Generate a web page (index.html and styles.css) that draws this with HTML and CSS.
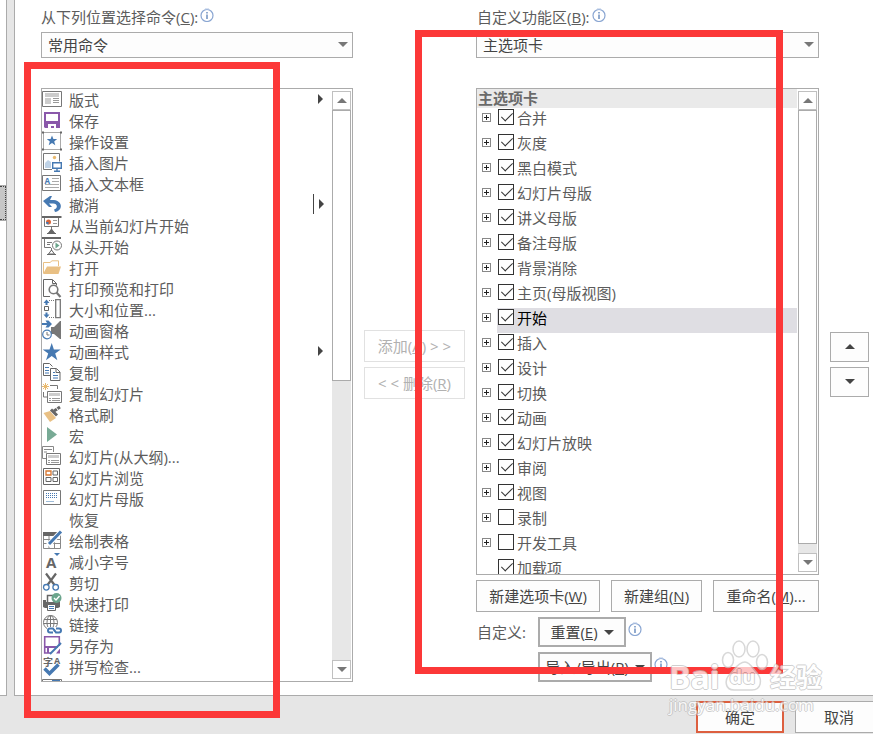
FILE: index.html
```html
<!DOCTYPE html>
<html lang="zh-CN">
<head>
    <meta charset="UTF-8">
    <meta name="viewport" content="width=device-width, initial-scale=1.0">
    <title>自定义功能区</title>
    <link rel="stylesheet" href="styles.css">
</head>
<body>
    <svg class="defs" aria-hidden="true">
        <symbol id="info" viewBox="0 0 14 14">
            <circle cx="7" cy="7.500" r="6" fill="none" stroke="#8aa6d2" stroke-width="1.200"/>
            <path d="M7 4v1.500M7 6.500v4.500" stroke="#4a74b0" stroke-width="1.200"/>
            <path d="M5 1h4" stroke="#b4c6e4"/>
        </symbol>
    </svg>
    <div class="dialog">
        <aside class="sidebar">
            <div class="sidebar-thumb"></div>
        </aside>
        <main class="panel">
            <!-- Commands -->
            <section class="column">
                <div class="caption"><label for="source">从下列位置选择命令(<u>C</u>):</label><svg class="info"><use href="#info"/></svg></div>
                <div class="dropdown">
                    <select id="source"><option>常用命令</option></select>
                </div>
                <div class="listbox commands">
                    <ul class="command-list">
                        <li><svg viewBox="0 0 20 21"><path d="M.5 1.500h19v15H.5z" fill="#fff" stroke="#777"/><path d="M3 3h14v4H3zM3 8h6v6H3z" fill="#ccc"/><path d="M11 8.500h6M11 10.500h6M11 12.500h6" stroke="#999"/></svg><span>版式</span><i class="more"></i></li>
                        <li><svg viewBox="0 0 20 21"><path d="M2 1h16v16H3l-1-1z" fill="#8a58aa"/><path d="M4 3h12v7H4z" fill="#fff"/><path d="M6 13h8v4h-2v-2H9v2H6z" fill="#fff"/></svg><span>保存</span></li>
                        <li><svg viewBox="0 0 20 21"><path d="M1.500 1v17M18.500 1v17M2 .500h16M2 17.500h16" stroke="#aaa"/><path d="M0-.500h2v2H0zM18-.500h2v2h-2zM0 16.500h2v2H0zM18 16.500h2v2h-2z" fill="#666"/><path d="M10 3.500l1.400 3.600h3.800l-3 2.400 1.100 3.700-3.300-2.200-3.300 2.200 1.100-3.700-3-2.400h3.800z" fill="#4679b2"/></svg><span>操作设置</span></li>
                        <li><svg viewBox="0 0 20 21"><path d="M10 16.500H1.500v-16h16v8" fill="none" stroke="#777"/><circle cx="12.500" cy="4.500" r="1.700" fill="#e9b96e"/><path d="M3 15V10l3-3 3 2v6z" fill="#bfd2e6"/><path d="M10.700 9.700h8.600v5.600h-8.600zM15 15v3M12 18.300h6" fill="#fff" stroke="#4679b2" stroke-width="1.400"/></svg><span>插入图片</span></li>
                        <li><svg viewBox="0 0 20 21"><path d="M.5 1.500h18v15H.5z" fill="#fff" stroke="#777"/><text x="2.500" y="9.500" class="glyph blue" font-size="8">A</text><path d="M10 4.500h7M10 7.500h7M3 10.500h14M3 13.500h14" stroke="#aaa"/></svg><span>插入文本框</span></li>
                        <li><svg viewBox="0 0 20 21"><path d="M1 6l7-5h2L8 5h4c9 1 9 11 1 12l-1-2.500c4-1 4-6-1-6H7l3 3.500H7z" fill="#4679b2"/></svg><span>撤消</span><i class="more split"></i></li>
                        <li><svg viewBox="0 0 20 21"><path d="M0 1h19.500" stroke="#666" stroke-width="2"/><path d="M2.500 2v8.500h14V2M9.500 11v3" fill="none" stroke="#777"/><circle cx="6.500" cy="6" r="2.500" fill="#d9663a"/><path d="M6.500 6v2.500A2.500 2.500 0 0 1 4 6z" fill="#4679b2"/><path d="M11 4.500h4M11 7.500h4" stroke="#999"/><path d="M5 17.500h9M6.500 17l3-4 3 4z" fill="#666" stroke="#666"/></svg><span>从当前幻灯片开始</span></li>
                        <li><svg viewBox="0 0 20 21"><path d="M0 1h19" stroke="#666" stroke-width="2"/><path d="M2.500 2v8.500H9M9.500 11v3M5 5.500h5M5 7.500h3" fill="none" stroke="#777"/><circle cx="15" cy="8.500" r="4.500" fill="#fff" stroke="#777"/><path d="M13.500 5.500l4 3-4 3z" fill="#6ba58c"/><path d="M5 17.500h9M6.500 17l3-4 3 4z" fill="none" stroke="#666"/></svg><span>从头开始</span></li>
                        <li><svg viewBox="0 0 20 21"><path d="M1.500 15V4.500H8l2-1.700h6.500V8" fill="#fff" stroke="#e9c084"/><path d="M1 16L5 8.500h14L16.500 16z" fill="#e9c084"/></svg><span>打开</span></li>
                        <li><svg viewBox="0 0 20 21"><path d="M8 17.500H1.500V.500h9l4 4v2M10.500 1v3.500h4" fill="none" stroke="#666"/><circle cx="11.500" cy="10.500" r="4.300" fill="#fff" stroke="#777" stroke-width="1.600"/><path d="M14.500 13.500l4 4.500" stroke="#777" stroke-width="2.200"/></svg><span>打印预览和打印</span></li>
                        <li><svg viewBox="0 0 20 21"><path d="M4.500-.500L1.500 3h2v2h2V3h2zM4.500 18l-3-3.500h2v-2h2v2h2z" fill="#4679b2"/><path d="M2.500 6.500h4v4h-4z" fill="none" stroke="#666"/><path d="M7 .500h6M7 17.500h6" stroke="#777" stroke-dasharray="1 1"/><path d="M13.700-.300h4.600v18h-4.600z" fill="none" stroke="#777" stroke-width="1.300"/></svg><span>大小和位置...</span></li>
                        <li><svg viewBox="0 0 20 21"><path d="M0 2h5L3.500-.500H6.500L10 3 6.500 6.500h-3L5 4H0z" fill="#4679b2"/><path d="M9 6h3l6-6h1v18h-1l-6-5H9z" fill="#777"/><circle cx="5" cy="13.500" r="4.300" fill="#fff" stroke="#4679b2" stroke-width="1.200"/><path d="M5 11v3h2.500" fill="none" stroke="#777"/></svg><span>动画窗格</span></li>
                        <li><svg viewBox="0 0 20 21"><path d="M9.700 1l2.200 6.500h6.800l-5.500 4 2.200 6.700-5.700-4.200L4 18.200l2.200-6.700-5.500-4h6.800z" fill="#4679b2"/></svg><span>动画样式</span><i class="more"></i></li>
                        <li><svg viewBox="0 0 20 21"><path d="M8 12.500H1.500V.500h6l3 3" fill="none" stroke="#666"/><path d="M3 4.500h4M3 7.500h4M3 10h4" stroke="#4679b2"/><path d="M8.500 5.500h6l3.500 3.500v8.500H8.500zM14 6v3.500h4" fill="#fff" stroke="#666"/><path d="M11 9.500h2M11 12.500h5M11 15h5" stroke="#4679b2"/></svg><span>复制</span></li>
                        <li><svg viewBox="0 0 20 21"><path d="M3.500-1v7M0 2.500h7M1 0l5 5M6 0L1 5" stroke="#e9b96e"/><path d="M8 1.500h7.500V5M5 13H1.500V8" fill="none" stroke="#777"/><path d="M5.500 7.500h14v11h-14z" fill="#fff" stroke="#777"/><path d="M7 9h11v3H7z" fill="#ccc"/><path d="M7 14.500h2m1 0h8M7 16.500h2m1 0h8" stroke="#999"/></svg><span>复制幻灯片</span></li>
                        <li><svg viewBox="0 0 20 21"><path d="M1.500 8L8 6l6 7-6 4z" fill="#e9c084"/><path d="M9 4.500l6 6" stroke="#666" stroke-width="3"/><path d="M12 6l6-4" stroke="#666" stroke-width="3"/><path d="M13 1l3 4" stroke="#fff"/></svg><span>格式刷</span></li>
                        <li><svg viewBox="0 0 20 21"><path d="M5 1l10 7.500L5 16z" fill="#78aa95"/></svg><span>宏</span></li>
                        <li><svg viewBox="0 0 20 21"><path d="M4 11.500H.5V-.500h11V5M2 2.500h8M2 5h3" fill="none" stroke="#888"/><path d="M4.500 6.500h14v11h-14z" fill="#fff" stroke="#777"/><path d="M6 8h11v3H6z" fill="#ccc"/><path d="M6 13.500h2m1 0h8M6 15.500h2m1 0h8" stroke="#999"/></svg><span>幻灯片(从大纲)...</span></li>
                        <li><svg viewBox="0 0 20 21"><path d="M1.500.500h16v16h-16zM4 9.500h5v4H4zM11 9.500h4.500v4H11zM11 3h4.500v4H11z" fill="none" stroke="#666"/><path d="M4 3h5v4H4z" fill="none" stroke="#d9762e" stroke-width="1.300"/></svg><span>幻灯片浏览</span></li>
                        <li><svg viewBox="0 0 20 21"><path d="M1.500 1.500h17v14h-17z" fill="#fff" stroke="#777"/><path d="M4 4.500h12M4 6.500h12M4 8.500h12" stroke="#4679b2" stroke-dasharray="1 1"/><path d="M4 12.500h8" stroke="#9dbbd8"/></svg><span>幻灯片母版</span></li>
                        <li><svg viewBox="0 0 20 21"></svg><span>恢复</span></li>
                        <li><svg viewBox="0 0 20 21"><path d="M1.500 2.500h17v15h-17zM7 4v13M12.500 4v13M2 8.500h16M2 12.500h16" fill="none" stroke="#888"/><path d="M1 1h18v4H1z" fill="#666"/><path d="M6 14.500L20-.500" stroke="#fff" stroke-width="5"/><path d="M7 13L19 .500" stroke="#4679b2" stroke-width="3"/></svg><span>绘制表格</span></li>
                        <li><svg viewBox="0 0 20 21"><text x="4" y="16" class="glyph" font-size="15">A</text><path d="M12 1h6l-3 3z" fill="#4679b2"/></svg><span>减小字号</span></li>
                        <li><svg viewBox="0 0 20 21"><path d="M4 .500l8.500 11.500M14 .500L5.500 12" stroke="#666" stroke-width="2.200"/><circle cx="4.300" cy="14.300" r="2.800" fill="#fff" stroke="#4679b2" stroke-width="1.300"/><circle cx="13.700" cy="14.300" r="2.800" fill="#fff" stroke="#4679b2" stroke-width="1.300"/></svg><span>剪切</span></li>
                        <li><svg viewBox="0 0 20 21"><path d="M1 6h3v2h11V6h3v7l-2 1H3l-2-1z" fill="#666"/><path d="M5.500 8V1.500H11" fill="none" stroke="#666" stroke-width="1.500"/><path d="M5.500 10.500h8v6h-8z" fill="#fff" stroke="#666"/><path d="M7 12.500h5M7 14.500h5" stroke="#4679b2"/><circle cx="14.500" cy="4" r="5" fill="#6ba58c"/><path d="M12 4l2 2 3.500-4" fill="none" stroke="#fff" stroke-width="1.400"/></svg><span>快速打印</span></li>
                        <li><svg viewBox="0 0 20 21"><g fill="none" stroke="#777"><circle cx="8.500" cy="7.500" r="7"/><ellipse cx="8.500" cy="7.500" rx="3.500" ry="7"/><path d="M8.500 1v13M2 4.500h13M1.500 8.500h14"/></g><rect x="5" y="12" width="15" height="8" fill="#fff"/><path d="M11 17.500H8a2 2 0 0 1 0-4h3l2 3M14 13.500h3a2 2 0 0 1 0 4h-3l-2-3" fill="none" stroke="#4679b2" stroke-width="2"/></svg><span>链接</span></li>
                        <li><svg viewBox="0 0 20 21"><path d="M9 17H2.700V.700h14.600V10" fill="none" stroke="#8a58aa" stroke-width="1.600"/><path d="M2 10h14v2H2zM5 12h2v5H5z" fill="#8a58aa"/><path d="M8 18L19 7" stroke="#4679b2" stroke-width="2"/><path d="M14 17.500l4-5v5z" fill="#8a58aa"/></svg><span>另存为</span></li>
                        <li><svg viewBox="0 0 20 21"><text x="1" y="8.500" class="glyph" font-size="10">字</text><text x="12" y="6.500" class="glyph" font-size="9">A</text><path d="M2.500 11.500l5 5 9-9" fill="none" stroke="#4679b2" stroke-width="3.500"/></svg><span>拼写检查...</span></li>
                        <li><svg viewBox="0 0 20 21"><path d="M.5 1.500h19v16H.5z" fill="#fff" stroke="#777"/><path d="M10 2h8v5h-8z" fill="#4679b2"/></svg><span></span></li>
                    </ul>
                    <div class="scrollbar">
                        <button class="up" aria-label="向上滚动"></button>
                        <div class="track"><div class="thumb half"></div></div>
                        <button class="down" aria-label="向下滚动"></button>
                    </div>
                </div>
                <div class="mark mark-left"></div>
            </section>

            <div class="transfer">
                <button disabled>添加(<u>A</u>) &gt; &gt;</button>
                <button disabled>&lt; &lt; 删除(<u>R</u>)</button>
            </div>

            <!-- Ribbon tabs -->
            <section class="column">
                <div class="caption indent"><label for="target">自定义功能区(<u>B</u>):</label><svg class="info"><use href="#info"/></svg></div>
                <div class="dropdown">
                    <select id="target"><option>主选项卡</option></select>
                </div>
                <div class="listbox tabs">
                    <div class="tree">
                        <h2>主选项卡</h2>
                        <ul>
                            <li><button class="expand" aria-label="展开"></button><label><input type="checkbox" checked>合并</label></li>
                            <li><button class="expand" aria-label="展开"></button><label><input type="checkbox" checked>灰度</label></li>
                            <li><button class="expand" aria-label="展开"></button><label><input type="checkbox" checked>黑白模式</label></li>
                            <li><button class="expand" aria-label="展开"></button><label><input type="checkbox" checked>幻灯片母版</label></li>
                            <li><button class="expand" aria-label="展开"></button><label><input type="checkbox" checked>讲义母版</label></li>
                            <li><button class="expand" aria-label="展开"></button><label><input type="checkbox" checked>备注母版</label></li>
                            <li><button class="expand" aria-label="展开"></button><label><input type="checkbox" checked>背景消除</label></li>
                            <li><button class="expand" aria-label="展开"></button><label><input type="checkbox" checked>主页(母版视图)</label></li>
                            <li class="selected"><button class="expand" aria-label="展开"></button><label><input type="checkbox" checked>开始</label></li>
                            <li><button class="expand" aria-label="展开"></button><label><input type="checkbox" checked>插入</label></li>
                            <li><button class="expand" aria-label="展开"></button><label><input type="checkbox" checked>设计</label></li>
                            <li><button class="expand" aria-label="展开"></button><label><input type="checkbox" checked>切换</label></li>
                            <li><button class="expand" aria-label="展开"></button><label><input type="checkbox" checked>动画</label></li>
                            <li><button class="expand" aria-label="展开"></button><label><input type="checkbox" checked>幻灯片放映</label></li>
                            <li><button class="expand" aria-label="展开"></button><label><input type="checkbox" checked>审阅</label></li>
                            <li><button class="expand" aria-label="展开"></button><label><input type="checkbox" checked>视图</label></li>
                            <li><button class="expand" aria-label="展开"></button><label><input type="checkbox">录制</label></li>
                            <li><button class="expand" aria-label="展开"></button><label><input type="checkbox">开发工具</label></li>
                            <li class="leaf"><label><input type="checkbox" checked>加载项</label></li>
                        </ul>
                    </div>
                    <div class="scrollbar">
                        <button class="up" aria-label="向上滚动"></button>
                        <div class="track"><div class="thumb full"></div></div>
                        <button class="down" aria-label="向下滚动"></button>
                    </div>
                </div>
                <div class="tab-actions">
                    <button class="new-tab">新建选项卡(<u>W</u>)</button>
                    <button class="new-group">新建组(<u>N</u>)</button>
                    <button class="rename">重命名(<u>M</u>)...</button>
                </div>
                <div class="customize">
                    <span class="customize-label">自定义:</span>
                    <div class="menu-row"><button class="menu-button reset"><span>重置(<u>E</u>)</span></button><svg class="info"><use href="#info"/></svg></div>
                    <div class="menu-row second"><button class="menu-button import"><span>导入/导出(<u>P</u>)</span></button><svg class="info"><use href="#info"/></svg></div>
                </div>
                <div class="mark mark-right"></div>
            </section>

            <div class="order">
                <button class="up" aria-label="上移"></button>
                <button class="down" aria-label="下移"></button>
            </div>
        </main>
    </div>
    <footer>
        <button class="ok">确定</button>
        <button class="cancel">取消</button>
    </footer>
    <div class="watermark">
        <svg class="paw" viewBox="0 0 48 52">
            <g fill="#fff" stroke="#c8c8c8" stroke-width="1.500">
                <ellipse cx="7" cy="20" rx="5.500" ry="7.500"/>
                <ellipse cx="18" cy="9" rx="6" ry="8"/>
                <ellipse cx="32" cy="9" rx="6" ry="8"/>
                <ellipse cx="41" cy="22" rx="5.500" ry="7.500"/>
                <path d="M24 22c5 0 8 7 12 11 6 7 4 17-5 17H13C4 50 3 40 9 34c4-4 8-12 15-12z"/>
            </g>
        </svg>
        <div class="brand"><span>Bai</span><span class="du">du</span><span class="cn">经验</span></div>
        <div class="site">jingyan.baidu.com</div>
    </div>
</body>
</html>
```
FILE: styles.css
```css
* {
    box-sizing: border-box;
}

body {
    margin: 0;
    min-height: 100vh;
    position: relative;
    overflow: hidden;
    background-color: #e6e6e6;
    color: #5c5c5c;
    font: 15px/18px "Open Sans", "Noto Sans CJK SC", sans-serif;
}

ul {
    list-style: none;
    margin: 0;
    padding: 0;
}

button {
    height: 32px;
    padding: 0;
    border: 1px solid #ababab;
    background-color: #fdfdfd;
    color: #444;
    font: inherit;
    white-space: nowrap;
}

.defs {
    display: none;
}

.dialog {
    display: flex;
    gap: 7px;
}

.sidebar {
    width: 7px;
    padding-top: 186px;
    background-color: #fff;
    border-right: 1px solid #ababab;
    border-bottom: 1px solid #ababab;
}

.sidebar-thumb {
    height: 34px;
    background-color: #c6c6c6;
    border: 1px dotted #444;
    border-left: 0;
    outline: 1px solid #aaa;
}

.panel {
    flex: 1;
    display: grid;
    grid-template-columns: minmax(0, 312fr) 101px minmax(0, 343fr) 39px;
    column-gap: 11px;
    padding: 0 4px 13px 26px;
    background-color: #fff;
    border-left: 1px solid #ababab;
    border-bottom: 1px solid #ababab;
}

.column {
    position: relative;
    padding-top: 8px;
}

.caption {
    display: flex;
    height: 24px;
}

.caption.indent {
    padding-left: 1px;
}

.info {
    width: 14px;
    height: 14px;
    margin-left: 2px;
}

.dropdown {
    position: relative;
    margin-bottom: 30px;
}

.dropdown select {
    display: block;
    width: 100%;
    height: 26px;
    padding: 0 6px;
    appearance: none;
    border: 1px solid #ababab;
    border-radius: 0;
    background-color: #fdfdfd;
    color: #444;
    font: inherit;
}

.dropdown::after {
    content: "";
    position: absolute;
    top: 10px;
    right: 5px;
    border: 5px solid transparent;
    border-top-color: #777;
    border-bottom: 0;
}

.listbox {
    display: flex;
    overflow: hidden;
    border: 1px solid #ababab;
    background-color: #fff;
}

.commands {
    height: 594px;
}

.tabs {
    height: 487px;
}

.command-list {
    flex: 1;
    padding-top: 1px;
}

.command-list li {
    display: flex;
    align-items: flex-start;
    height: 21px;
    line-height: 21px;
}

.command-list svg {
    width: 20px;
    height: 21px;
    margin-right: 7px;
    overflow: visible;
}

.glyph {
    fill: #666;
    font-weight: bold;
}

.glyph.blue {
    fill: #4679b2;
}

.more {
    position: relative;
    margin-top: 4px;
    margin-left: auto;
    margin-right: 9px;
    border: 5px solid transparent;
    border-left-color: #444;
    border-right: 0;
}

.more.split {
    margin-right: 8px;
}

.more.split::before {
    content: "";
    position: absolute;
    left: -11px;
    top: -10px;
    width: 1px;
    height: 20px;
    background-color: #444;
}

/* Scrollbars */
.scrollbar {
    display: flex;
    flex-direction: column;
    width: 19px;
    margin: 2px 1px 2px 0;
}

.scrollbar button {
    height: 19px;
    border-color: #c0c0c0;
    background-color: #fff;
}

.up::after,
.down::after {
    content: "";
    display: block;
    width: 0;
    margin: auto;
    border: 5px solid transparent;
    border-bottom-color: #777;
    border-top: 0;
}

.down::after {
    border-top: 5px solid #777;
    border-bottom: 0;
}

.track {
    flex: 1;
    background-color: #e7e7e7;
}

.thumb {
    border: 1px solid #ababab;
    background-color: #fff;
}

.thumb.half {
    height: 271px;
}

.thumb.full {
    height: 434px;
}

/* Middle and side buttons */
.transfer,
.order {
    display: flex;
    flex-direction: column;
    justify-content: center;
    gap: 5px;
    padding-top: 46px;
}

.transfer button {
    border-color: #e1e1e1;
    background-color: #fff;
    color: #b1b1b1;
}

.order button {
    height: 30px;
}

.order .up::after {
    border-bottom-color: #444;
}

.order .down::after {
    border-top-color: #444;
}

/* Tab tree */
.tree {
    flex: 1;
    margin-right: 1px;
}

.tree h2 {
    height: 19px;
    margin: 0;
    padding-left: 1px;
    background-color: #eaeaea;
    color: #6a6a6a;
    font-size: 15px;
    line-height: 19px;
}

.tree li {
    display: flex;
    height: 25px;
    padding-left: 5px;
}

.tree li.leaf {
    padding-left: 14px;
}

.expand {
    width: 9px;
    height: 9px;
    margin-top: 5px;
    border-color: #888;
    background: linear-gradient(#222, #222) center / 5px 1px no-repeat, linear-gradient(#222, #222) center / 1px 5px no-repeat;
}

.tree label {
    flex: 1;
    display: flex;
    gap: 3px;
    margin-left: 6px;
    padding: 1px 0 0 1px;
    line-height: 19px;
}

.tree .selected label {
    background-color: #dfdee3;
    color: #000;
}

.tree input {
    width: 16px;
    height: 16px;
    margin: 0;
    appearance: none;
    border: 1px solid #333;
    background-color: #fff;
}

.tree input:checked::after {
    content: "";
    display: block;
    width: 5px;
    height: 10px;
    margin: 0 0 0 5px;
    border: solid #333;
    border-width: 0 1px 1px 0;
    transform: rotate(45deg);
}

.tab-actions {
    display: grid;
    grid-template-columns: 124fr 91fr 106fr;
    gap: 11px;
    margin: 5px 0;
}

.customize {
    display: grid;
    grid-template-columns: 62px 1fr;
    row-gap: 5px;
}

.customize-label {
    padding-left: 1px;
    line-height: 30px;
}

.menu-row {
    display: flex;
    height: 30px;
}

.menu-row .info {
    margin-top: 5px;
}

.menu-row.second {
    grid-column: 2;
}

.menu-button {
    display: flex;
    align-items: center;
    justify-content: center;
    gap: 6px;
    height: 30px;
    border-width: 2px;
}

.menu-button::after {
    content: "";
    border: 5px solid transparent;
    border-top-color: #444;
    border-bottom: 0;
}

.menu-button.reset {
    width: 88px;
}

.menu-button.import {
    width: 114px;
}

footer {
    display: flex;
    justify-content: flex-end;
    gap: 11px;
    margin-right: -10px;
    padding: 5px 0 1px;
}

footer button {
    width: 88px;
}

footer .ok {
    border: 2px solid #dd5f3f;
}

/* Red highlight frames */
.mark {
    position: absolute;
    border: 7px solid #fc3838;
    pointer-events: none;
}

.mark-left {
    top: 62px;
    right: 73px;
    bottom: -36px;
    left: -17px;
}

.mark-right {
    top: 30px;
    right: 36px;
    bottom: 8px;
    left: -61px;
}

/* Watermark */
.watermark {
    position: absolute;
    top: 640px;
    right: 51px;
    width: 153px;
    opacity: 0.7;
    color: #fff;
    font-weight: bold;
    text-shadow: 1px 0 #bbb, -1px 0 #bbb, 0 1px #bbb, 0 -1px #bbb;
    pointer-events: none;
}

.paw {
    position: absolute;
    top: 0;
    left: 52px;
    width: 48px;
    height: 52px;
}

.brand {
    position: relative;
    display: flex;
    align-items: center;
    height: 54px;
    padding-top: 19px;
    font-size: 32px;
}

.brand .du {
    margin-left: 10px;
    font-size: 20px;
}

.brand .cn {
    margin-left: auto;
    font-size: 26px;
}

.site {
    font-size: 17px;
    font-weight: normal;
    line-height: 22px;
}
```
